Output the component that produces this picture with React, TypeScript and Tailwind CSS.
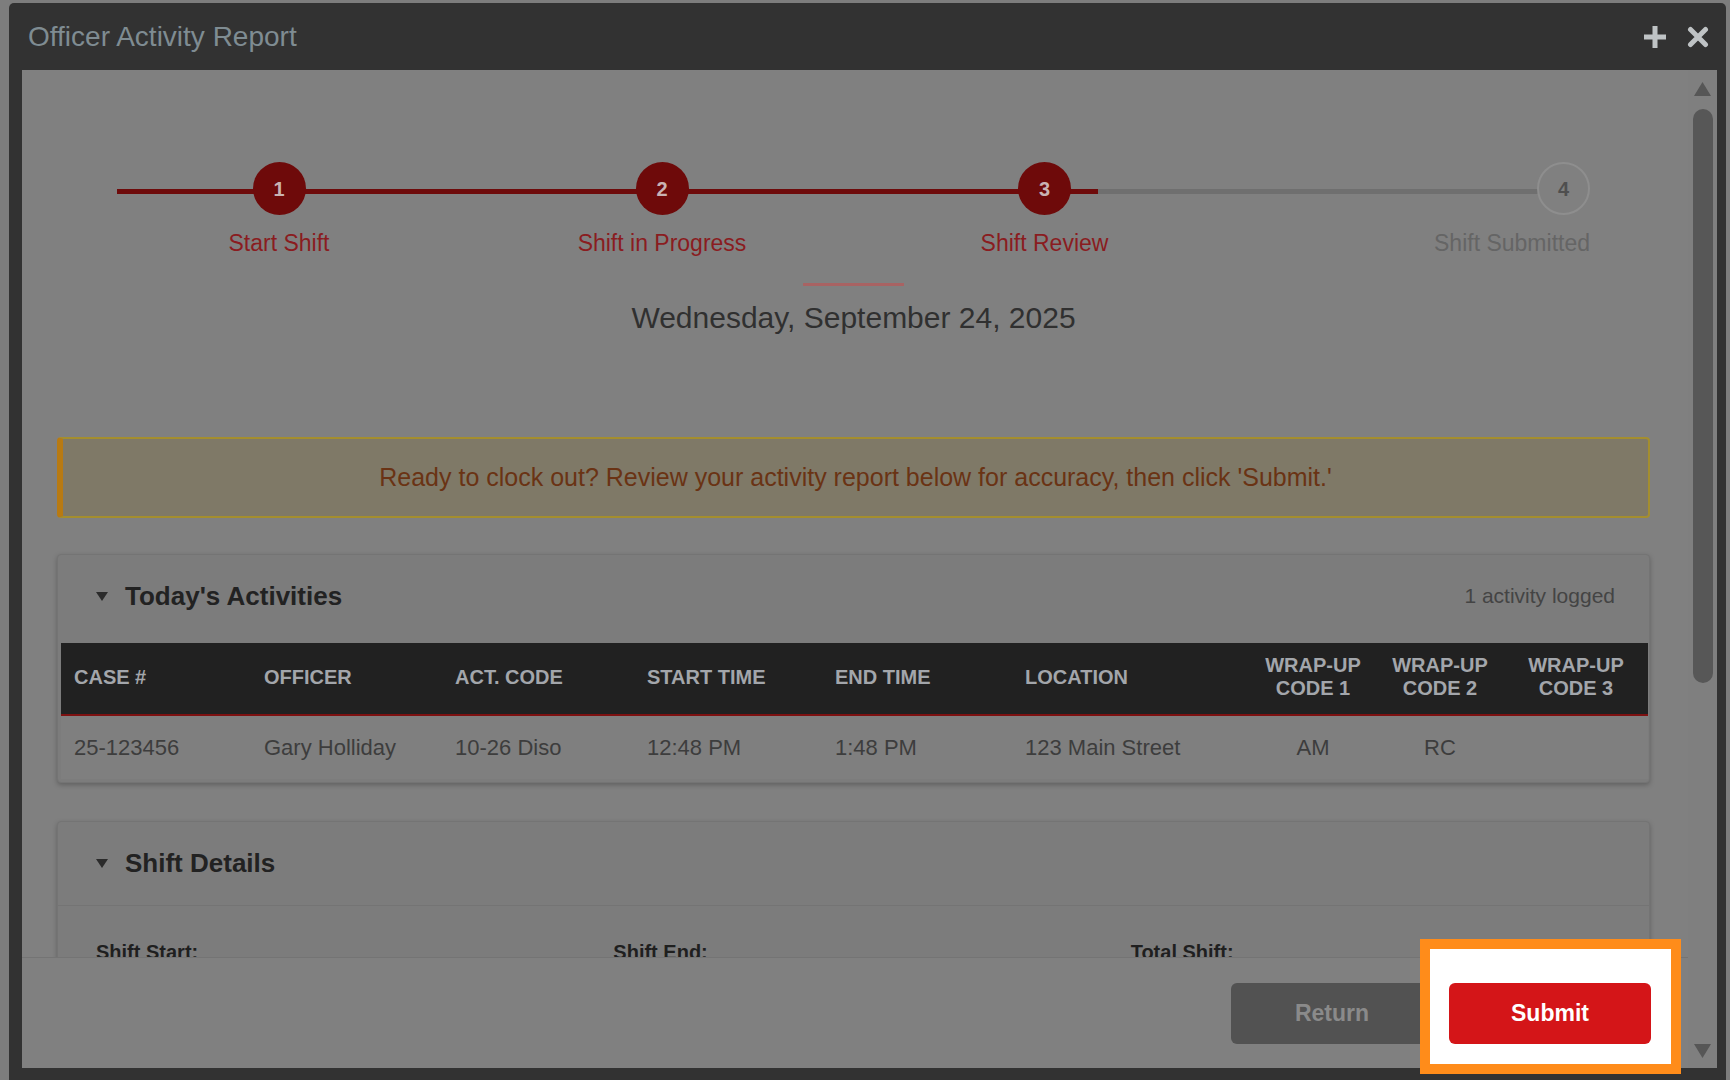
import React from "react";

type Step = { n: number; label: string; width: string; done: boolean; align: string };

const steps: Step[] = [
  { n: 1, label: "Start Shift", width: "w-[324px]", done: true, align: "items-center" },
  { n: 2, label: "Shift in Progress", width: "w-[442px]", done: true, align: "items-center" },
  { n: 3, label: "Shift Review", width: "w-[323px]", done: true, align: "items-center" },
  { n: 4, label: "Shift Submitted", width: "w-[384px]", done: false, align: "items-end" },
];

const columns = [
  { key: "case", label: ["CASE #"], width: "w-[190px]", center: false },
  { key: "officer", label: ["OFFICER"], width: "w-[191px]", center: false },
  { key: "code", label: ["ACT. CODE"], width: "w-[192px]", center: false },
  { key: "start", label: ["START TIME"], width: "w-[188px]", center: false },
  { key: "end", label: ["END TIME"], width: "w-[190px]", center: false },
  { key: "location", label: ["LOCATION"], width: "w-[238px]", center: false },
  { key: "wrap1", label: ["WRAP-UP", "CODE 1"], width: "w-[126px]", center: true },
  { key: "wrap2", label: ["WRAP-UP", "CODE 2"], width: "w-[128px]", center: true },
  { key: "wrap3", label: ["WRAP-UP", "CODE 3"], width: "", center: true },
];

const activities: Record<string, string>[] = [
  {
    case: "25-123456",
    officer: "Gary Holliday",
    code: "10-26 Diso",
    start: "12:48 PM",
    end: "1:48 PM",
    location: "123 Main Street",
    wrap1: "AM",
    wrap2: "RC",
    wrap3: "",
  },
];

function Caret() {
  return (
    <svg width="14" height="11" viewBox="0 0 14 11" className="shrink-0">
      <path d="M1 1h12L7 10z" fill="#2b2b2b" />
    </svg>
  );
}

function Stepper() {
  return (
    <div className="relative ml-[60px] w-[1473px]">
      <div className="absolute left-0 top-[27px] h-[5px] w-[981px] bg-[#6e0b0b]" />
      <div className="absolute left-[981px] top-[27px] h-[5px] w-[465px] bg-[#6f6f6f]" />
      <div className="relative flex">
        {steps.map((s) => (
          <div key={s.n} className={`flex flex-col ${s.width} ${s.align}`}>
            {s.done ? (
              <div className="flex h-[53px] w-[53px] items-center justify-center rounded-full bg-[#6e0a0a] text-[20px] font-bold text-[#c9b3b3]">
                {s.n}
              </div>
            ) : (
              <div className="flex h-[53px] w-[53px] items-center justify-center rounded-full border-2 border-[#8e8e8e] bg-[#808080] text-[20px] font-bold text-[#4f4f4f]">
                {s.n}
              </div>
            )}
            <div
              className={`mt-[15px] text-[23px] leading-[26px] ${
                s.done ? "text-[#8a1c20]" : "text-[#656565]"
              }`}
            >
              {s.label}
            </div>
          </div>
        ))}
      </div>
    </div>
  );
}

function ActivitiesCard() {
  return (
    <div className="mt-[36px] rounded-[4px] border border-[#747474] bg-[#7c7c7c] pb-[3px] shadow-[0_2px_5px_rgba(0,0,0,0.25)]">
      <div className="flex h-[88px] items-center justify-between pb-[6px] pl-[37px] pr-[34px]">
        <div className="flex items-center gap-[16px]">
          <Caret />
          <span className="text-[26px] font-bold text-[#222]">Today's Activities</span>
        </div>
        <span className="text-[21px] text-[#444]">1 activity logged</span>
      </div>
      <div className="ml-[3px] mr-[1px]">
        <table className="w-full table-fixed border-collapse">
          <colgroup>
            {columns.map((c) => (
              <col key={c.key} className={c.width} />
            ))}
          </colgroup>
          <thead>
            <tr className="h-[72px] border-b-2 border-[#7d1111] bg-[#212121]">
              {columns.map((c) => (
                <th
                  key={c.key}
                  className={`px-[13px] pb-[3px] text-[20px] font-bold leading-[23px] text-[#a3a6ab] ${
                    c.center ? "text-center" : "text-left"
                  }`}
                >
                  {c.label.map((l) => (
                    <div key={l}>{l}</div>
                  ))}
                </th>
              ))}
            </tr>
          </thead>
          <tbody>
            {activities.map((a) => (
              <tr key={a.case} className="h-[64px] bg-[#7f7f7f]">
                {columns.map((c) => (
                  <td
                    key={c.key}
                    className={`px-[13px] text-[22px] text-[#3d3d3d] ${
                      c.center ? "text-center" : "text-left"
                    }`}
                  >
                    {a[c.key]}
                  </td>
                ))}
              </tr>
            ))}
          </tbody>
        </table>
      </div>
    </div>
  );
}

function ShiftDetailsCard() {
  return (
    <div className="mt-[38px] rounded-[4px] border border-[#747474] bg-[#7c7c7c] shadow-[0_2px_5px_rgba(0,0,0,0.25)]">
      <div className="flex h-[84px] items-center gap-[16px] border-b border-[#747474] pl-[37px]">
        <Caret />
        <span className="text-[26px] font-bold text-[#222]">Shift Details</span>
      </div>
      <div className="grid grid-cols-3 gap-[37px] px-[38px] pb-[30px] pt-[34px] text-[20px]">
        {["Shift Start:", "Shift End:", "Total Shift:"].map((k) => (
          <div key={k} className="font-bold leading-[24px] text-[#1f1f1f]">
            {k}
          </div>
        ))}
      </div>
    </div>
  );
}

function Scrollbar() {
  return (
    <div className="flex w-[29px] flex-col items-center bg-[#7f7f7f] pb-[9px] pt-[11px]">
      <svg width="19" height="16" viewBox="0 0 19 16">
        <path d="M9.5 1L18 15H1z" fill="#565656" />
      </svg>
      <div className="mt-[12px] h-[574px] w-[20px] rounded-full bg-[#575757]" />
      <div className="flex-1" />
      <svg width="19" height="16" viewBox="0 0 19 16">
        <path d="M1 1h17L9.5 15z" fill="#565656" />
      </svg>
    </div>
  );
}

export default function App() {
  return (
    <div className="relative h-[1080px] w-[1730px] overflow-hidden bg-[#7d7d7d] font-['Liberation_Sans',Arial,sans-serif]">
      {/* report window */}
      <div className="absolute left-[9px] top-[3px] flex h-[1077px] w-[1717px] flex-col rounded-t-[5px] bg-[#323232]">
        <div className="flex h-[67px] items-center justify-between pl-[19px] pr-[17px]">
          <span className="text-[28px] text-[#7f8c92]">Officer Activity Report</span>
          <div className="flex items-center gap-[20px]">
            <svg width="24" height="24" viewBox="0 0 24 24">
              <path d="M9.5 1h5v8.5H23v5h-8.5V23h-5v-8.5H1v-5h8.5z" fill="#bfc3c5" />
            </svg>
            <svg width="22" height="22" viewBox="0 0 22 22">
              <path d="M3.5 3.5l15 15M18.5 3.5l-15 15" stroke="#bfc3c5" strokeWidth="5" strokeLinecap="round" />
            </svg>
          </div>
        </div>

        <div className="mb-[12px] ml-[13px] mr-[9px] flex min-h-0 flex-1 bg-[#808080]">
          <div className="flex min-w-0 flex-1 flex-col">
            <div className="min-h-0 flex-1 overflow-hidden pl-[35px] pr-[38px] pt-[92px]">
              <Stepper />

              <div className="flex flex-col items-center">
                <div className="mt-[27px] h-[3px] w-[101px] bg-[#a86363]" />
                <div className="mt-[14px] text-[30px] leading-[36px] text-[#303030]">
                  Wednesday, September 24, 2025
                </div>
              </div>

              <div className="mt-[101px] flex h-[81px] items-center justify-center rounded-[4px] border-2 border-l-[6px] border-[#a48e2e] border-l-[#b87a12] bg-[#7f7967] text-[25px] text-[#6a3314]">
                Ready to clock out? Review your activity report below for accuracy, then click 'Submit.'
              </div>

              <ActivitiesCard />
              <ShiftDetailsCard />
            </div>

            <div className="flex h-[111px] shrink-0 items-start justify-end gap-[16px] border-t border-[#747474] pr-[37px] pt-[25px]">
              <button className="h-[61px] w-[202px] rounded-[6px] bg-[#525252] text-[23px] font-bold text-[#8a8a8a]">
                Return
              </button>
              <button className="relative z-20 h-[61px] w-[202px] rounded-[6px] bg-[#d41518] text-[23px] font-bold text-white">
                Submit
              </button>
            </div>
          </div>
          <Scrollbar />
        </div>
      </div>

      {/* tour spotlight around the submit action */}
      <div className="absolute left-[1420px] top-[939px] z-10 h-[135px] w-[261px] border-[10px] border-[#ff8c1a] bg-white" />
    </div>
  );
}
